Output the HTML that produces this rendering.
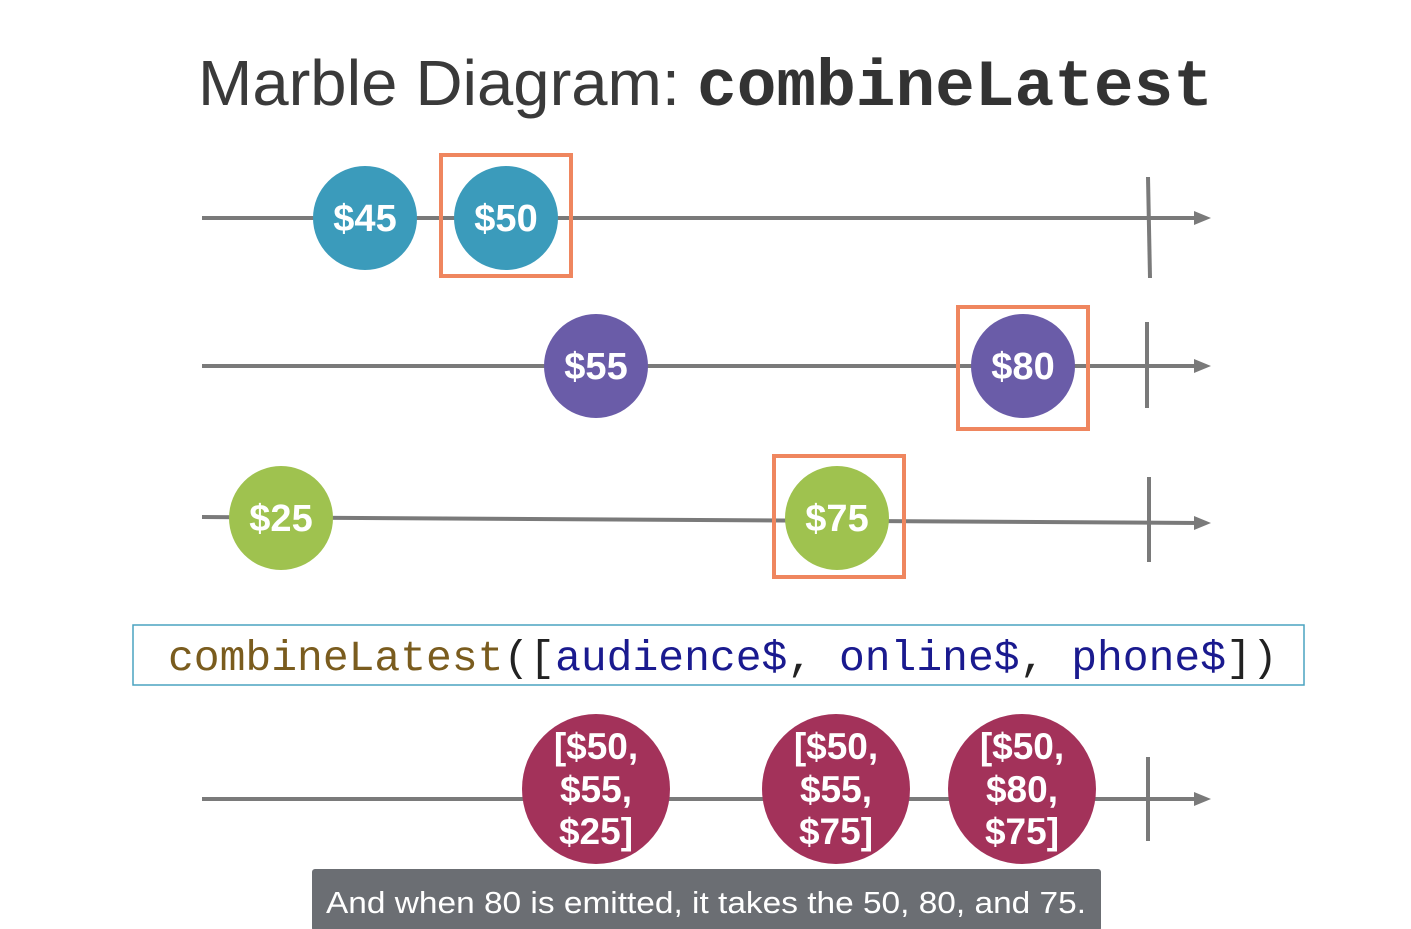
<!DOCTYPE html>
<html><head><style>
html,body{margin:0;padding:0;background:#fff;width:1411px;height:929px;overflow:hidden}
</style></head><body>
<svg width="1411" height="929" viewBox="0 0 1411 929" xmlns="http://www.w3.org/2000/svg">
<text x="198" y="105" font-family="Liberation Sans, sans-serif" font-size="64" fill="#3a3a3a" textLength="482" lengthAdjust="spacingAndGlyphs">Marble Diagram:</text>
<text x="697" y="105" font-family="Liberation Mono, monospace" font-size="66" font-weight="bold" fill="#333" textLength="516" lengthAdjust="spacingAndGlyphs">combineLatest</text>
<g stroke="#7a7a7a" stroke-width="4" fill="none">
<line x1="202" y1="218" x2="1200" y2="218"/>
<line x1="1148" y1="177" x2="1150" y2="278"/>
<line x1="202" y1="366" x2="1200" y2="366"/>
<line x1="1147" y1="322" x2="1147" y2="408"/>
<line x1="202" y1="517" x2="1200" y2="523"/>
<line x1="1149" y1="477" x2="1149" y2="562"/>
<line x1="202" y1="799" x2="1200" y2="799"/>
<line x1="1148" y1="757" x2="1148" y2="841"/>
</g>
<g fill="#7a7a7a">
<polygon points="1194,211 1211,218 1194,225"/>
<polygon points="1194,359 1211,366 1194,373"/>
<polygon points="1194,516 1211,523 1194,530"/>
<polygon points="1194,792 1211,799 1194,806"/>
</g>
<g font-family="Liberation Sans, sans-serif" font-weight="bold" font-size="38" fill="#fff" text-anchor="middle">
<circle cx="365" cy="218" r="52" fill="#3b9bbb"/><text x="365" y="231">$45</text>
<circle cx="506" cy="218" r="52" fill="#3b9bbb"/><text x="506" y="231">$50</text>
<circle cx="596" cy="366" r="52" fill="#6a5ca8"/><text x="596" y="379">$55</text>
<circle cx="1023" cy="366" r="52" fill="#6a5ca8"/><text x="1023" y="379">$80</text>
<circle cx="281" cy="518" r="52" fill="#9fc24f"/><text x="281" y="531">$25</text>
<circle cx="837" cy="518" r="52" fill="#9fc24f"/><text x="837" y="531">$75</text>
</g>
<g fill="none" stroke="#ef865f" stroke-width="4">
<rect x="441" y="155" width="130" height="121"/>
<rect x="958" y="307" width="130" height="122"/>
<rect x="774" y="456" width="130" height="121"/>
</g>
<rect x="133" y="625" width="1171" height="60" fill="none" stroke="#4aa3c0" stroke-width="1.5"/>
<text x="168" y="670" font-family="Liberation Mono, monospace" font-size="43" fill="#1a1a8f"><tspan fill="#7a5c1e">combineLatest</tspan><tspan fill="#222">([</tspan>audience$<tspan fill="#222">, </tspan>online$<tspan fill="#222">, </tspan>phone$<tspan fill="#222">])</tspan></text>
<g font-family="Liberation Sans, sans-serif" font-weight="bold" font-size="37" fill="#fff" text-anchor="middle">
<ellipse cx="596" cy="789" rx="74" ry="75" fill="#a3325a"/>
<text x="596" y="759">[$50,</text><text x="596" y="802">$55,</text><text x="596" y="844">$25]</text>
<ellipse cx="836" cy="789" rx="74" ry="75" fill="#a3325a"/>
<text x="836" y="759">[$50,</text><text x="836" y="802">$55,</text><text x="836" y="844">$75]</text>
<ellipse cx="1022" cy="789" rx="74" ry="75" fill="#a3325a"/>
<text x="1022" y="759">[$50,</text><text x="1022" y="802">$80,</text><text x="1022" y="844">$75]</text>
</g>
<rect x="312" y="869" width="789" height="62" rx="3" fill="#6b6e73"/>
<text x="326" y="913" font-family="Liberation Sans, sans-serif" font-size="31" fill="#fff" textLength="760" lengthAdjust="spacingAndGlyphs">And when 80 is emitted, it takes the 50, 80, and 75.</text>
</svg>
</body></html>
